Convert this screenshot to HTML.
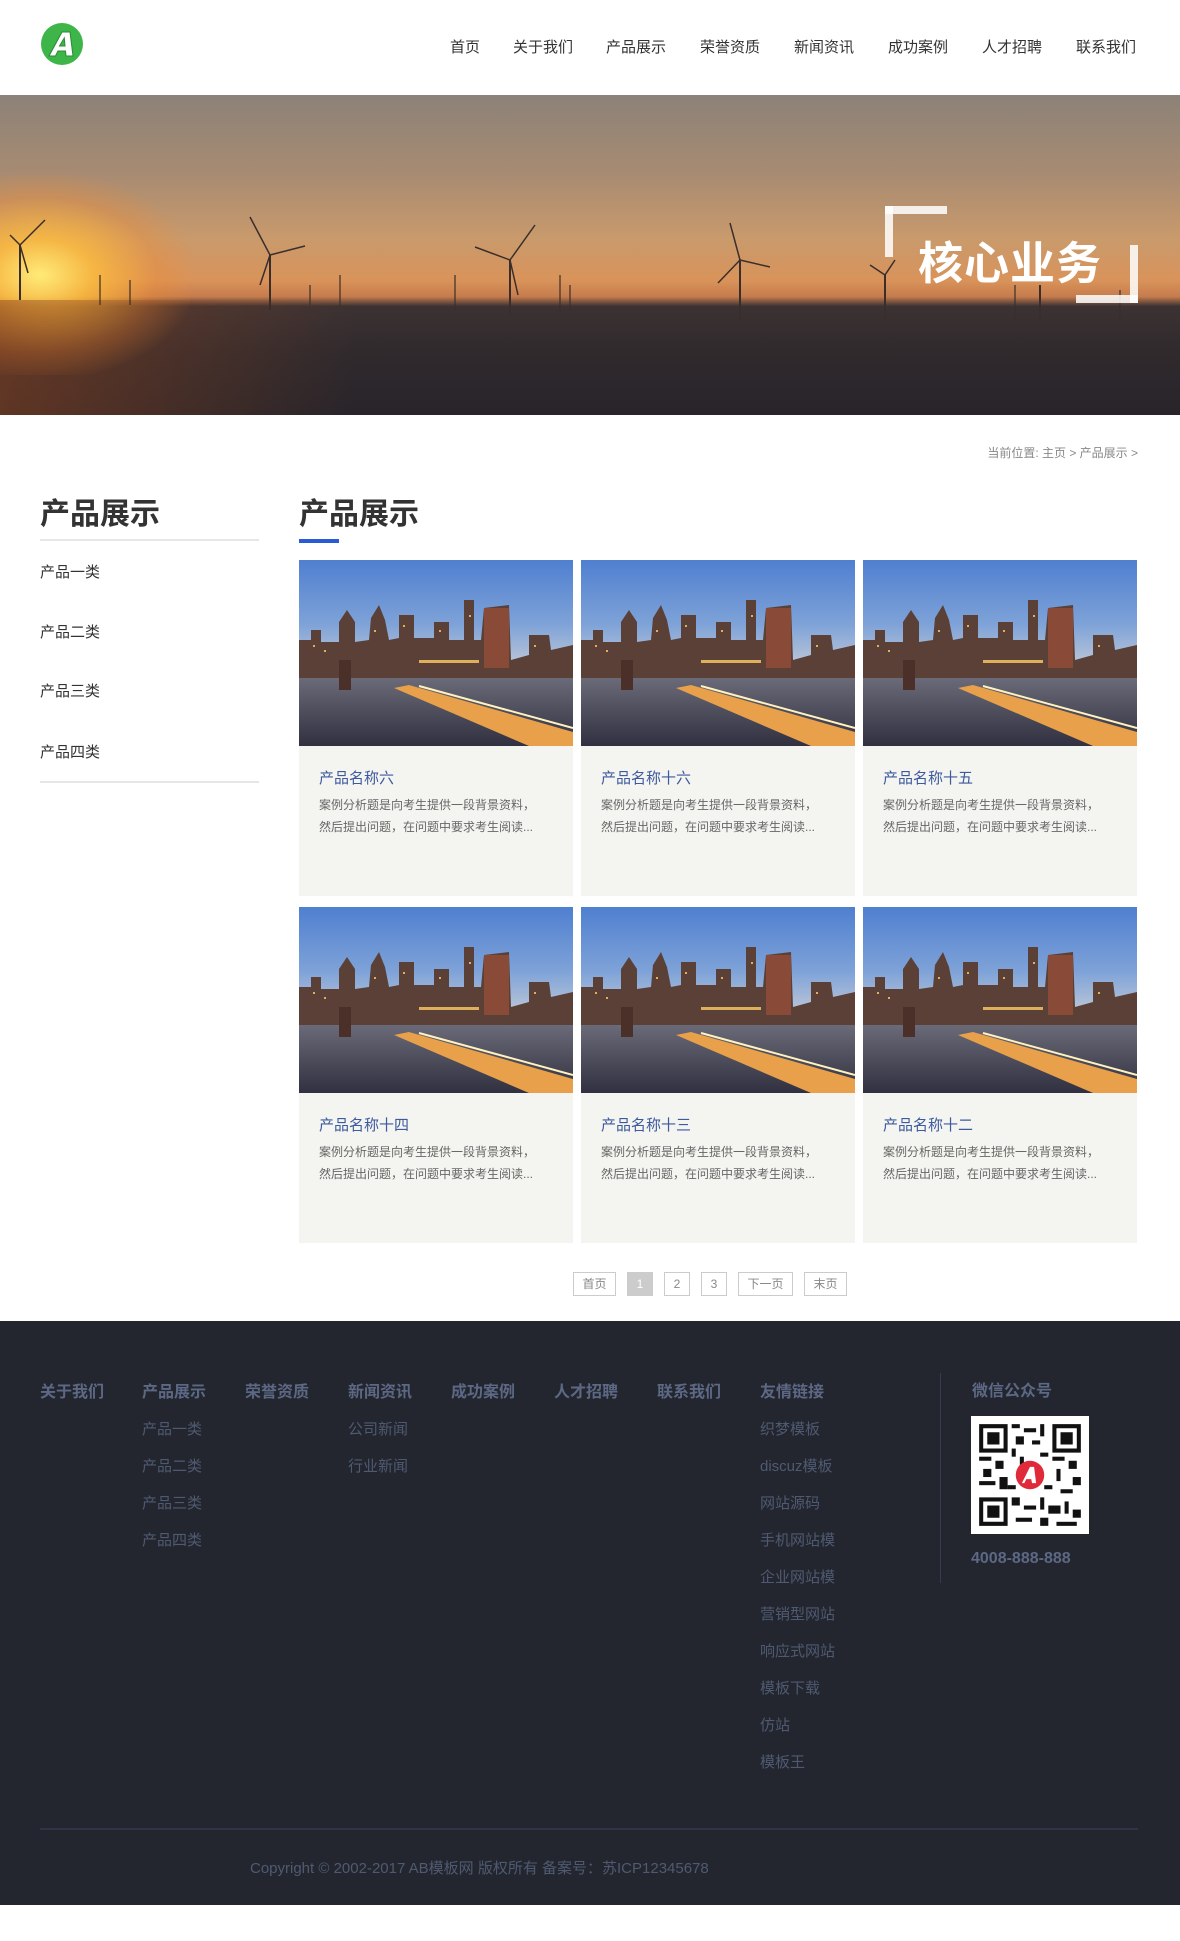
<!DOCTYPE html>
<html><head><meta charset="utf-8">
<style>
*{margin:0;padding:0;box-sizing:border-box}
body{width:1180px;height:1941px;background:#fff;font-family:"Liberation Sans","Noto Sans CJK SC",sans-serif;position:relative;overflow:hidden}
.a{position:absolute}
.nav span{position:absolute;top:36px;font-size:15px;color:#333;white-space:nowrap}
.side{font-size:15px;color:#333}
.card{position:absolute;width:274px;height:336px;background:#f4f4f1}
.card svg{display:block}
.card h4{position:absolute;left:20px;top:207px;font-size:15px;font-weight:normal;color:#3d5a9e}
.card p{position:absolute;left:20px;top:234px;width:226px;font-size:12px;line-height:22px;color:#666}
.pg{position:absolute;top:1272px;height:24px;border:1px solid #ccc;font-size:12px;color:#888;text-align:center;line-height:22px}
.fh{position:absolute;top:1378px;font-size:16px;font-weight:bold;color:#5c6884}
.fi{position:absolute;font-size:15px;color:#4f5a72}
</style></head><body>
<svg class="a" style="left:40px;top:22px" width="44" height="44" viewBox="0 0 44 44"><circle cx="22" cy="22" r="21" fill="#3db549"/><path d="M9 34 L22 10 L30 10 L33 34 L26 34 L25.5 29 L18 29 L15.5 34 Z M19.5 24 L25 24 L24.3 16 Z" fill="#fff" stroke="#2a8a34" stroke-width="1"/></svg>
<div class="nav">
<span style="left:450px">首页</span><span style="left:513px">关于我们</span><span style="left:606px">产品展示</span><span style="left:700px">荣誉资质</span><span style="left:794px">新闻资讯</span><span style="left:888px">成功案例</span><span style="left:982px">人才招聘</span><span style="left:1076px">联系我们</span>
</div>
<div class="a" style="left:0;top:95px;width:1180px;height:320px;overflow:hidden;background:linear-gradient(180deg,#8c8278 0%,#a88b72 25%,#c99a6c 45%,#d9935a 58%,#c67c4d 63%,#3c3233 66%,#302a2d 80%,#28242a 100%)">
<div class="a" style="left:-110px;top:80px;width:300px;height:200px;background:radial-gradient(ellipse at center,rgba(255,235,120,1) 0%,rgba(255,190,60,.8) 25%,rgba(240,140,50,.35) 55%,rgba(240,140,50,0) 75%)"></div>
<div class="a" style="left:0;top:205px;width:1180px;height:115px;background:linear-gradient(90deg,rgba(150,70,30,.5),rgba(60,40,40,0) 30%)"></div>
<svg class="a" style="left:0;top:0" width="1180" height="320" stroke="#3a2e2c" fill="none">
<g stroke-width="2"><line x1="20" y1="150" x2="20" y2="205"/><line x1="270" y1="160" x2="270" y2="215"/><line x1="510" y1="165" x2="510" y2="220"/><line x1="740" y1="165" x2="740" y2="225"/><line x1="885" y1="180" x2="885" y2="225"/><line x1="1040" y1="190" x2="1040" y2="225"/></g>
<g stroke-width="1.5"><path d="M20 150 L10 140 M20 150 L45 125 M20 150 L28 178"/><path d="M270 160 L250 122 M270 160 L305 151 M270 160 L260 190"/><path d="M510 165 L475 152 M510 165 L535 130 M510 165 L518 200"/><path d="M740 165 L730 128 M740 165 L770 172 M740 165 L718 188"/><path d="M885 180 L870 170 M885 180 L895 165"/></g>
<g stroke-width="1.2"><line x1="100" y1="180" x2="100" y2="210"/><line x1="130" y1="185" x2="130" y2="210"/><line x1="340" y1="180" x2="340" y2="212"/><line x1="455" y1="180" x2="455" y2="215"/><line x1="560" y1="180" x2="560" y2="218"/><line x1="570" y1="190" x2="570" y2="216"/><line x1="310" y1="190" x2="310" y2="210"/><line x1="1015" y1="190" x2="1015" y2="225"/><line x1="1120" y1="195" x2="1120" y2="228"/></g>
</svg>
<div class="a" style="left:885px;top:111px;width:62px;height:8px;background:rgba(255,255,255,.85)"></div>
<div class="a" style="left:885px;top:111px;width:8px;height:51px;background:rgba(255,255,255,.85)"></div>
<div class="a" style="left:1130px;top:150px;width:8px;height:58px;background:rgba(255,255,255,.85)"></div>
<div class="a" style="left:1076px;top:200px;width:62px;height:8px;background:rgba(255,255,255,.85)"></div>
<div class="a" style="left:918px;top:132px;font-size:45px;font-weight:bold;color:#fff;letter-spacing:1px;white-space:nowrap">核心业务</div>
</div>
<div class="a" style="right:42px;top:444px;font-size:12px;color:#888">当前位置: 主页 &gt; 产品展示 &gt;</div>
<div class="a" style="left:40px;top:489px;font-size:30px;font-weight:bold;color:#333">产品展示</div>
<div class="a" style="left:40px;top:539px;width:219px;height:2px;background:#e6e6e6"></div>
<div class="a side" style="left:40px;top:561px">产品一类</div>
<div class="a side" style="left:40px;top:621px">产品二类</div>
<div class="a side" style="left:40px;top:680px">产品三类</div>
<div class="a side" style="left:40px;top:741px">产品四类</div>
<div class="a" style="left:40px;top:781px;width:219px;height:2px;background:#e6e6e6"></div>
<div class="a" style="left:299px;top:489px;font-size:30px;font-weight:bold;color:#333">产品展示</div>
<div class="a" style="left:299px;top:539px;width:40px;height:4px;background:#2a5bd7"></div>
<svg width="0" height="0" style="position:absolute"><defs>
<linearGradient id="sk" x1="0" y1="0" x2="0" y2="1"><stop offset="0" stop-color="#4f7fd0"/><stop offset=".35" stop-color="#7fa3d8"/><stop offset=".55" stop-color="#b8c4d8"/></linearGradient>
<linearGradient id="wt" x1="0" y1="0" x2="0" y2="1"><stop offset="0" stop-color="#6a6a78"/><stop offset="1" stop-color="#303040"/></linearGradient>
<g id="city"><rect width="274" height="186" fill="url(#sk)"/>
<path d="M0 120 L0 80 L12 80 L12 70 L22 70 L22 82 L40 82 L40 62 L48 50 L56 62 L56 82 L70 80 L72 58 L80 45 L86 60 L90 80 L100 78 L100 55 L115 55 L115 78 L135 78 L135 62 L150 62 L150 80 L165 80 L165 40 L175 40 L175 80 L182 80 L185 48 L210 45 L212 100 L230 95 L230 75 L250 75 L252 90 L274 85 L274 140 Z" fill="#5a4036"/>
<rect x="185" y="48" width="25" height="60" fill="#8a4a38"/>
<rect x="0" y="118" width="274" height="68" fill="url(#wt)"/>
<path d="M110 125 L274 172 L274 186 L230 186 L95 128 Z" fill="#e8a04a"/>
<path d="M120 126 L274 168" stroke="#fff2c0" stroke-width="2"/>
<path d="M40 100 L40 130 L52 130 L52 100 Z" fill="#4a3028"/>
<g fill="#ffcc66" opacity=".8"><rect x="14" y="85" width="2" height="2"/><rect x="25" y="90" width="2" height="2"/><rect x="75" y="70" width="2" height="2"/><rect x="104" y="65" width="2" height="2"/><rect x="140" y="70" width="2" height="2"/><rect x="170" y="55" width="2" height="2"/><rect x="235" y="85" width="2" height="2"/><rect x="120" y="100" width="60" height="3"/></g>
</g></defs></svg>
<div class="card" style="left:299px;top:560px"><svg width="274" height="186"><use href="#city"/></svg><h4>产品名称六</h4><p>案例分析题是向考生提供一段背景资料，然后提出问题，在问题中要求考生阅读...</p></div>
<div class="card" style="left:581px;top:560px"><svg width="274" height="186"><use href="#city"/></svg><h4>产品名称十六</h4><p>案例分析题是向考生提供一段背景资料，然后提出问题，在问题中要求考生阅读...</p></div>
<div class="card" style="left:863px;top:560px"><svg width="274" height="186"><use href="#city"/></svg><h4>产品名称十五</h4><p>案例分析题是向考生提供一段背景资料，然后提出问题，在问题中要求考生阅读...</p></div>
<div class="card" style="left:299px;top:907px"><svg width="274" height="186"><use href="#city"/></svg><h4>产品名称十四</h4><p>案例分析题是向考生提供一段背景资料，然后提出问题，在问题中要求考生阅读...</p></div>
<div class="card" style="left:581px;top:907px"><svg width="274" height="186"><use href="#city"/></svg><h4>产品名称十三</h4><p>案例分析题是向考生提供一段背景资料，然后提出问题，在问题中要求考生阅读...</p></div>
<div class="card" style="left:863px;top:907px"><svg width="274" height="186"><use href="#city"/></svg><h4>产品名称十二</h4><p>案例分析题是向考生提供一段背景资料，然后提出问题，在问题中要求考生阅读...</p></div>
<div class="pg" style="left:573px;width:43px">首页</div>
<div class="pg" style="left:627px;width:26px;background:#ccc;border-color:#ccc;color:#fff">1</div>
<div class="pg" style="left:664px;width:26px">2</div>
<div class="pg" style="left:701px;width:26px">3</div>
<div class="pg" style="left:738px;width:55px">下一页</div>
<div class="pg" style="left:804px;width:43px">末页</div>
<div class="a" style="left:0;top:1321px;width:1180px;height:584px;background:#23262e"></div>
<div class="fh" style="left:40px">关于我们</div><div class="fh" style="left:142px">产品展示</div><div class="fh" style="left:245px">荣誉资质</div><div class="fh" style="left:348px">新闻资讯</div><div class="fh" style="left:451px">成功案例</div><div class="fh" style="left:554px">人才招聘</div><div class="fh" style="left:657px">联系我们</div><div class="fh" style="left:760px">友情链接</div>
<div class="fi" style="left:142px;top:1418px">产品一类</div><div class="fi" style="left:142px;top:1455px">产品二类</div><div class="fi" style="left:142px;top:1492px">产品三类</div><div class="fi" style="left:142px;top:1529px">产品四类</div>
<div class="fi" style="left:348px;top:1418px">公司新闻</div><div class="fi" style="left:348px;top:1455px">行业新闻</div>
<div class="fi" style="left:760px;top:1418px">织梦模板</div><div class="fi" style="left:760px;top:1455px">discuz模板</div><div class="fi" style="left:760px;top:1492px">网站源码</div><div class="fi" style="left:760px;top:1529px">手机网站模</div><div class="fi" style="left:760px;top:1566px">企业网站模</div><div class="fi" style="left:760px;top:1603px">营销型网站</div><div class="fi" style="left:760px;top:1640px">响应式网站</div><div class="fi" style="left:760px;top:1677px">模板下载</div><div class="fi" style="left:760px;top:1714px">仿站</div><div class="fi" style="left:760px;top:1751px">模板王</div>
<div class="a" style="left:940px;top:1373px;width:1px;height:210px;background:#333c50"></div>
<div class="fh" style="left:972px;top:1377px">微信公众号</div>
<svg class="a" style="left:971px;top:1416px" width="118" height="118" viewBox="0 0 29 29"><rect width="29" height="29" fill="#fff"/>
<g fill="#111"><path d="M2 2h7v7H2z M3 3v5h5V3z M4 4h3v3H4z" fill-rule="evenodd"/><path d="M20 2h7v7h-7z M21 3v5h5V3z M22 4h3v3h-3z" fill-rule="evenodd"/><path d="M2 20h7v7H2z M3 21v5h5v-5z M4 22h3v3H4z" fill-rule="evenodd"/>
<rect x="10" y="2" width="2" height="1"/><rect x="13" y="3" width="3" height="1"/><rect x="17" y="2" width="1" height="3"/><rect x="11" y="5" width="2" height="2"/><rect x="15" y="6" width="2" height="1"/><rect x="10" y="8" width="1" height="2"/><rect x="2" y="10" width="3" height="1"/><rect x="6" y="11" width="2" height="2"/><rect x="3" y="13" width="2" height="2"/><rect x="2" y="16" width="4" height="1"/><rect x="7" y="15" width="2" height="3"/><rect x="20" y="10" width="3" height="1"/><rect x="24" y="11" width="2" height="2"/><rect x="21" y="13" width="1" height="3"/><rect x="25" y="15" width="2" height="2"/><rect x="22" y="18" width="3" height="1"/><rect x="10" y="20" width="2" height="2"/><rect x="13" y="22" width="3" height="1"/><rect x="17" y="20" width="1" height="3"/><rect x="19" y="22" width="3" height="2"/><rect x="23" y="21" width="1" height="3"/><rect x="11" y="25" width="4" height="1"/><rect x="17" y="25" width="2" height="2"/><rect x="21" y="26" width="5" height="1"/><rect x="25" y="23" width="2" height="2"/><rect x="12" y="10" width="1" height="2"/><rect x="17" y="9" width="2" height="1"/><rect x="9" y="17" width="2" height="1"/><rect x="18" y="17" width="2" height="1"/></g>
<circle cx="14.5" cy="14.5" r="3.5" fill="#e02a3a"/><path d="M12.5 16.5l2-4h1l.5 4h-1l-.2-1h-1.2l-.5 1z" fill="#fff"/></svg>
<div class="a" style="left:971px;top:1550px;font-size:16px;font-weight:bold;color:#5c6884">4008-888-888</div>
<div class="a" style="left:40px;top:1828px;width:1098px;height:2px;background:#2e3546"></div>
<div class="a" style="left:250px;top:1857px;font-size:15px;color:#4f5a72;white-space:nowrap">Copyright © 2002-2017 AB模板网 版权所有 备案号：苏ICP12345678</div>
</body></html>
